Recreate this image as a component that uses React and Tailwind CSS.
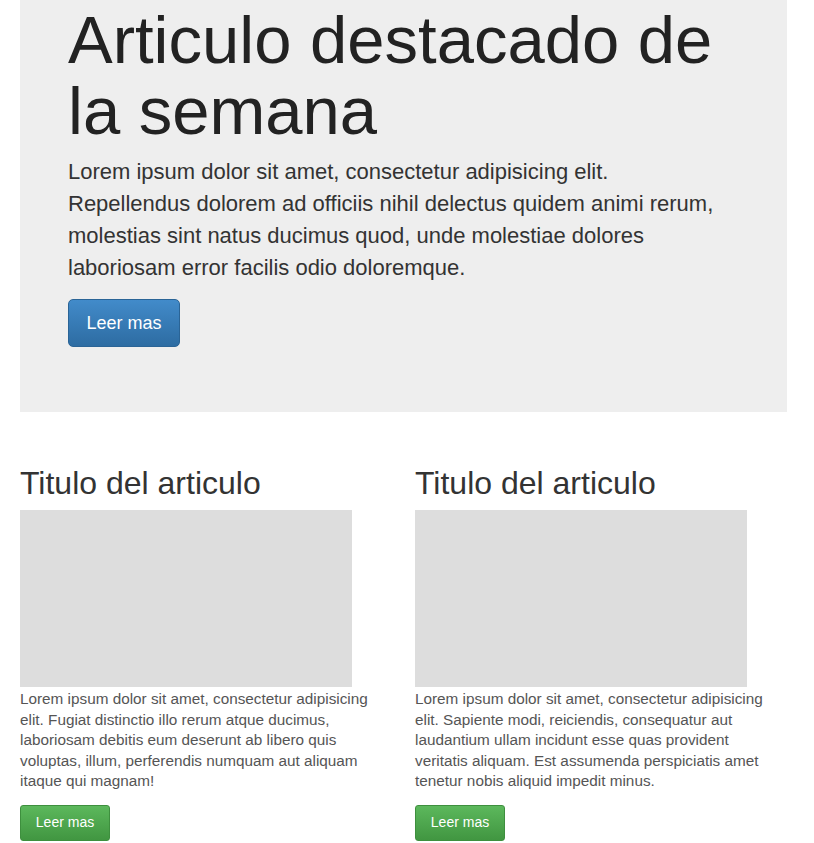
const articles = [
  {
    title: 'Titulo del articulo',
    text: 'Lorem ipsum dolor sit amet, consectetur adipisicing elit. Fugiat distinctio illo rerum atque ducimus, laboriosam debitis eum deserunt ab libero quis voluptas, illum, perferendis numquam aut aliquam itaque qui magnam!',
  },
  {
    title: 'Titulo del articulo',
    text: 'Lorem ipsum dolor sit amet, consectetur adipisicing elit. Sapiente modi, reiciendis, consequatur aut laudantium ullam incidunt esse quas provident veritatis aliquam. Est assumenda perspiciatis amet tenetur nobis aliquid impedit minus.',
  },
];

export default function App() {
  return (
    <div
      className="min-h-[843px] bg-white pl-[20px] text-[#333]"
      style={{ fontFamily: '"Liberation Sans", Arial, sans-serif' }}
    >
      {/* Jumbotron */}
      <div className="h-[412px] w-[767px] bg-[#eeeeee] pl-[48px] pt-[4px]">
        <h1 className="text-[67px] leading-[71px] text-[#222]">
          Articulo destacado de
          <br />
          la semana
        </h1>
        <p className="mt-[10px] w-[668px] text-[22px] leading-[32px] text-[#333]">
          Lorem ipsum dolor sit amet, consectetur adipisicing elit.
          Repellendus dolorem ad officiis nihil delectus quidem animi rerum,
          molestias sint natus ducimus quod, unde molestiae dolores
          laboriosam error facilis odio doloremque.
        </p>
        <button className="mt-[15px] h-[48px] w-[112px] rounded-[5px] border border-[#2a6496] bg-gradient-to-b from-[#428bca] to-[#2d6ca2] text-[18px] text-white">
          Leer mas
        </button>
      </div>

      {/* Articulos */}
      <div className="mt-[53px] flex">
        {articles.map((a, i) => (
          <div key={i} className="w-[395px]">
            <h2 className="text-[32px] leading-[36px] text-[#333]">{a.title}</h2>
            <div className="mt-[9px] h-[177px] w-[332px] bg-[#dddddd]" />
            <p className="mt-[2px] w-[370px] text-[15.3px] leading-[20.5px] text-[#555]">
              {a.text}
            </p>
            <button className="mt-[13px] h-[36px] w-[90px] rounded-[3px] border border-[#3e8f3e] bg-gradient-to-b from-[#5cb85c] to-[#419641] text-[14px] text-white">
              Leer mas
            </button>
          </div>
        ))}
      </div>
    </div>
  );
}
